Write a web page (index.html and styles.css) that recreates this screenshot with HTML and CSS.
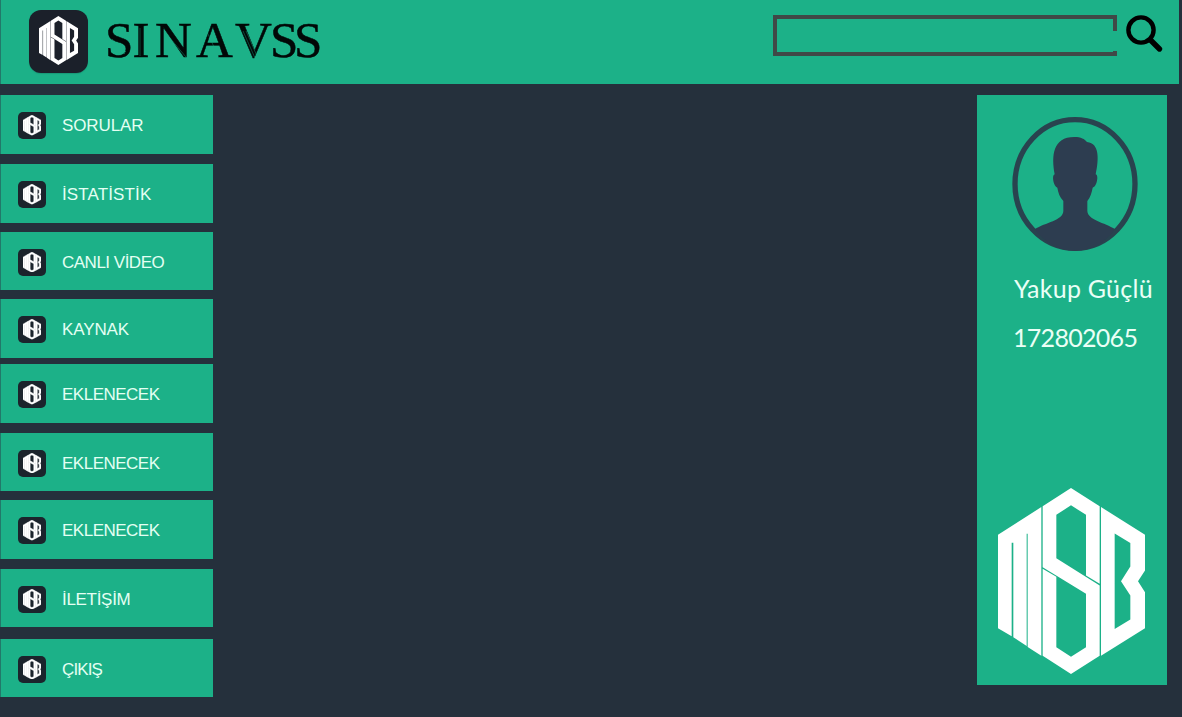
FILE: index.html
```html
<!DOCTYPE html>
<html lang="tr">
<head>
<meta charset="utf-8">
<title>SINAVSS</title>
<link rel="stylesheet" href="styles.css">
</head>
<body>
<svg class="defs" aria-hidden="true">
  <symbol id="msb" viewBox="53 38 441 557" preserveAspectRatio="none">
    <path fill-rule="evenodd" d="M53 178 183 95V540L142 514V175H139V511L99 485V202H94V482L53 458Z
      M187 93 272 38 358 93V325L317 300V118L272 90 228 118V248L358 330V540L272 595 187 540V280L228 304V515L272 543 317 515V355L187 275Z
      M362 95 494 178V285L473 317 494 350V458L362 540ZM403 174V460L450 432V360L422 317 450 273V203Z"/>
  </symbol>
</svg>
<header class="header">
  <div class="app-icon"><svg class="app-mark"><use href="#msb"/></svg></div>
  <svg class="brand" viewBox="0 0 230 60" role="img" aria-label="SINAVSS">
    <text class="brand-text" y="45.5" x="1 28.5 51 92 131 166 190">SINAVSS</text>
    <path class="brand-grain" d="M8 28l14 13M7 31l14 12M36 17v28M60 20l22 26M104 23l12 26M139 20l12 27M142 20l11 25M172 28l14 13M196 28l14 13"/>
  </svg>
  <div class="search"></div>
  <svg class="search-icon" viewBox="0 0 40 40"><circle cx="16" cy="17" r="12.6"/><path class="handle" d="M25.5 27 34.5 36"/></svg>
</header>
<main class="main">
  <nav class="menu">
    <a class="item"><i class="tile"><svg class="mark"><use href="#msb"/></svg></i>SORULAR</a>
    <a class="item airy"><i class="tile"><svg class="mark"><use href="#msb"/></svg></i>İSTATİSTİK</a>
    <a class="item tight"><i class="tile"><svg class="mark"><use href="#msb"/></svg></i>CANLI VİDEO</a>
    <a class="item"><i class="tile"><svg class="mark"><use href="#msb"/></svg></i>KAYNAK</a>
    <a class="item tight"><i class="tile"><svg class="mark"><use href="#msb"/></svg></i>EKLENECEK</a>
    <a class="item tight"><i class="tile"><svg class="mark"><use href="#msb"/></svg></i>EKLENECEK</a>
    <a class="item tight"><i class="tile"><svg class="mark"><use href="#msb"/></svg></i>EKLENECEK</a>
    <a class="item snug"><i class="tile"><svg class="mark"><use href="#msb"/></svg></i>İLETİŞİM</a>
    <a class="item tightest"><i class="tile"><svg class="mark"><use href="#msb"/></svg></i>ÇIKIŞ</a>
  </nav>
  <aside class="profile">
    <svg class="avatar" viewBox="126 97 376 402">
      <ellipse class="ring" cx="314" cy="298" rx="180" ry="193"/>
      <path class="person" d="M193 434C225 413 278 408 279 379V349C268 337 264 325 261 309C250 307 243 271 253 269C243 213 247 157 312 157C332 157 343 163 350 172C389 176 385 226 376 269C386 270 380 307 367 309C364 325 360 338 351 349V379C353 407 402 413 435 434C404 475 364 498 314 498S224 475 193 434Z"/>
    </svg>
    <div class="name">Yakup Güçlü</div>
    <div class="number">172802065</div>
    <svg class="emblem"><use href="#msb"/></svg>
  </aside>
</main>
</body>
</html>
```

FILE: styles.css
```css
* { box-sizing: border-box; }
body { margin: 0; width: 1182px; height: 717px; overflow: hidden; background: #25303c; font-family: "Liberation Sans", Arial, sans-serif; }
svg { display: block; }
.defs { position: absolute; width: 0; height: 0; }
.header { display: flex; align-items: flex-start; width: 1179px; height: 84px; background: #1cb188; border-left: 1px solid #22796a; }
.app-icon { flex: none; width: 59px; height: 63px; margin: 10px 0 0 28px; padding: 6px 0 0 10px; border-radius: 12px; background: #1b202a; box-shadow: 0 1px 1px #199a78; }
.app-mark { width: 39px; height: 49px; fill: #fff; }
.brand { flex: none; width: 230px; height: 60px; margin: 11px 0 0 16px; }
.brand-text { font: 51px "Liberation Serif", "Times New Roman", serif; fill: #020807; stroke: #020807; stroke-width: .5; }
.brand-grain { fill: none; stroke: #1cb188; stroke-width: .6; opacity: .65; }
.search { flex: none; width: 344px; height: 41px; margin: 15px 0 0 439px; border: 4px solid #404947; border-right: 0;
  background: linear-gradient(#404947, #404947) right 0 top 0 / 4px 12px no-repeat, linear-gradient(#404947, #404947) right 0 bottom 0 / 4px 1px no-repeat; }
.search-icon { width: 40px; height: 40px; margin: 13px 0 0 8px; fill: none; stroke: #000; stroke-width: 4.4; stroke-linecap: round; }
.handle { stroke-width: 5.4; }
.main { display: flex; justify-content: space-between; padding: 11px 15px 0 0; }
.menu { width: 213px; display: grid; grid-template-rows: 69px 67.5px 67.5px 65px 68.5px 67.5px 68.5px 70px 59px; }
.item { display: flex; align-items: center; height: 58.6px; padding: 4px 0 0 17px; border-left: 1px solid #22796a; background: #1cb188; color: #e4fff3; font-size: 17px; letter-spacing: -.12px; white-space: nowrap; }
.airy { letter-spacing: .12px; }
.snug { letter-spacing: -.3px; }
.tight { letter-spacing: -.5px; }
.tightest { letter-spacing: -.9px; }
.tile { flex: none; width: 28px; height: 27px; margin: 0 16px 1px 0; padding: 3px 0 0 5px; border-radius: 5px; background: #1b242c; }
.mark { width: 18px; height: 20.5px; fill: #fff; stroke: #fff; stroke-width: 12; }
.profile { width: 190px; height: 590px; padding-top: 22px; background: #1cb188; color: #eafff6; font: 25px/30px Lato, sans-serif; }
.avatar { width: 126px; height: 134px; margin-left: 35px; }
.ring { fill: none; stroke: #29434f; stroke-width: 16; }
.person { fill: #2d3d50; }
.name { margin: 22px 0 0 37px; white-space: nowrap; letter-spacing: .25px; }
.number { margin: 19px 0 0 36px; letter-spacing: -.7px; }
.emblem { width: 147px; height: 186px; margin: 136px 0 0 21px; fill: #fff; }
```
